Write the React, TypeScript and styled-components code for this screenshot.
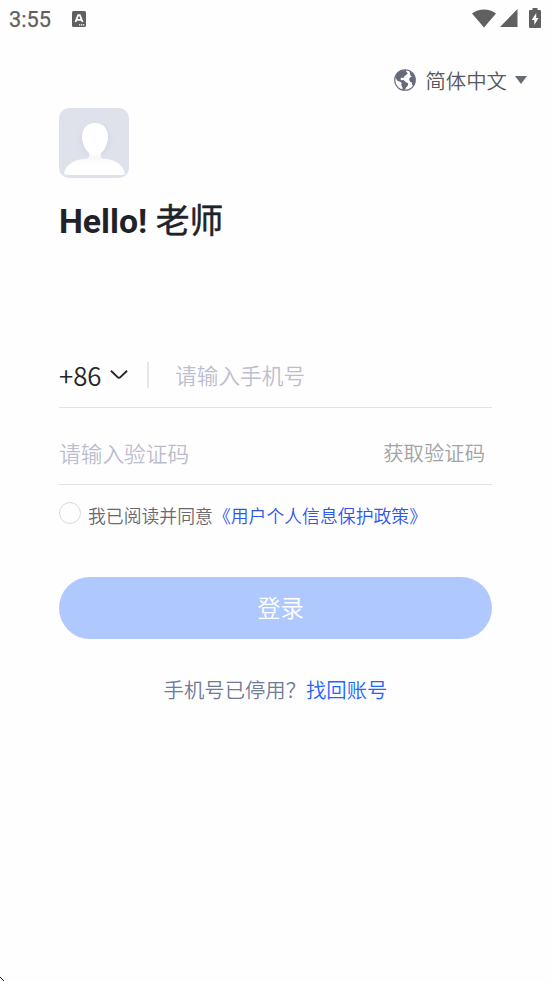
import React from 'react';
import styled, { createGlobalStyle } from 'styled-components';

const GlobalStyle = createGlobalStyle`
  * { box-sizing: border-box; }
  body { margin: 0; background: #fefefe; }
  button, input { font: inherit; border: 0; padding: 0; margin: 0; background: none; }
`;

const Screen = styled.main`
  position: relative;
  width: 551px;
  height: 981px;
  overflow: hidden;
  background: #fefefe;
  font-family: "Noto Sans CJK SC", sans-serif;
  font-weight: 350;
  white-space: nowrap;
`;

const StatusBar = styled.header`
  display: flex;
  align-items: center;
  height: 38px;
  padding: 0 10px 0 9px;
  color: #606060;
`;

const Clock = styled.time`
  width: 63px;
  padding-top: 1px;
  font: 400 21.7px/38px Roboto, sans-serif;
  -webkit-text-stroke: 0.25px #606060;
`;

const StatusIcons = styled.div`
  display: flex;
  align-items: center;
  margin: -2px 0 0 auto;
`;

const StatusIcon = styled.svg<{ $gap?: number }>`
  display: block;
  flex: none;
  margin-left: ${({ $gap = 0 }) => $gap}px;
`;

const LanguageButton = styled.button`
  display: flex;
  align-items: center;
  height: 30px;
  margin: 27px 24px 0 auto;
  color: #56585d;
  font-size: 20.4px;
  line-height: 30px;
`;

const LanguageName = styled.span`
  margin: 0 8px 0 9px;
`;

const Content = styled.section`
  display: flex;
  flex-direction: column;
  width: 433px;
  margin: 13px 0 0 59px;
`;

const Avatar = styled.svg`
  display: block;
  width: 70px;
  height: 70px;
`;

const Greeting = styled.h1`
  margin: 16px 0 0;
  color: #1f2329;
  font-size: 33.8px;
  font-weight: 400;
  line-height: 50px;
  height: 50px;
  -webkit-text-stroke: 0.5px #1f2329;
`;

const Latin = styled.span`
  font-family: Roboto, sans-serif;
  font-weight: 700;
  -webkit-text-stroke: 0;
`;

const Field = styled.div<{ $height: number; $drop?: number }>`
  display: flex;
  align-items: center;
  height: ${({ $height }) => $height}px;
  padding-top: ${({ $drop = 0 }) => $drop}px;
  border-bottom: 1px solid #e3e3e3;
`;

const Form = styled.form`
  display: flex;
  flex-direction: column;
  margin-top: 100px;
`;

const CountryCode = styled.button`
  display: flex;
  align-items: center;
  gap: 8px;
  width: 88px;
  margin-top: -1px;
  color: #252525;
  font-size: 25.8px;
  line-height: 38px;
`;

const Divider = styled.span`
  width: 2px;
  height: 26px;
  margin: -1px 26px 0 0;
  background: #e6e6e6;
`;

const Input = styled.input<{ $lift?: number }>`
  flex: 1;
  min-width: 0;
  height: 36px;
  margin-top: ${({ $lift = 1 }) => -$lift}px;
  color: #252525;
  font-size: 21.7px;
  outline: 0;
  &::placeholder { color: #bcbdcf; opacity: 1; }
`;

const CodeButton = styled.button`
  margin: -2px 7px 0 0;
  color: #a3a3a3;
  font-size: 20.35px;
  line-height: 30px;
`;

const Agreement = styled.label`
  display: flex;
  align-items: center;
  height: 28px;
  margin-top: 16px;
  color: #69696e;
  font-size: 17.85px;
  line-height: 28px;
`;

const Radio = styled.input`
  appearance: none;
  flex: none;
  width: 22px;
  height: 22px;
  margin: -5px 7px 0 0;
  border: 1px solid #d9d9d9;
  border-radius: 50%;
`;

const Link = styled.a<{ $color: string }>`
  color: ${({ $color }) => $color};
  text-decoration: none;
`;

const LoginButton = styled.button`
  height: 62px;
  margin-top: 48px;
  padding: 0 0 2px 10px;
  border-radius: 31px;
  background: #afc9ff;
  color: #fff;
  font-size: 23.3px;
  line-height: 60px;
`;

const Recovery = styled.p`
  margin: 35px 0 0;
  color: #6f7a98;
  font-size: 20.35px;
  line-height: 30px;
  text-align: center;
`;

const CornerMark = styled.svg`
  position: absolute;
  left: 0;
  bottom: 0;
`;

export default function App() {
  return (
    <Screen>
      <GlobalStyle />
      <StatusBar>
        <Clock>3:55</Clock>
        <StatusIcon width="14" height="16" viewBox="0 0 14 16">
          <rect width="14" height="16" rx="1.5" fill="#606060" />
          <path d="M3.4 11 6.2 4.2h1.6l2.8 6.8M4.7 8.8h4.6" fill="none" stroke="#fff" strokeWidth="1.8" />
          <path d="M7 13.8h1.3m.7 0h1.3m.7 0h1.3" stroke="#fff" strokeWidth="1.2" />
        </StatusIcon>
        <StatusIcons>
          <StatusIcon width="24" height="19" viewBox="0 0 24 19">
            <path d="M0 4.5C6.8-.8 17.2-.8 24 4.5L12 18.5Z" fill="#606060" />
          </StatusIcon>
          <StatusIcon $gap={4} width="18" height="18" viewBox="0 0 18 18">
            <path d="M17.5 0v18H0Z" fill="#606060" />
          </StatusIcon>
          <StatusIcon $gap={11} width="12" height="20" viewBox="0 0 12 20">
            <path d="M3.5 0h5v2H11q1 0 1 1v16q0 1-1 1H1q-1 0-1-1V3q0-1 1-1h2.5Z" fill="#606060" />
            <path d="M7.2 5 2.8 12H5.3v5L9.5 10H7.2Z" fill="#fff" />
          </StatusIcon>
        </StatusIcons>
      </StatusBar>

      <LanguageButton type="button">
        <svg width="22" height="22" viewBox="0 0 22 22">
          <circle cx="11" cy="11" r="10.3" fill="none" stroke="#666b78" strokeWidth="1.1" />
          <path d="M12 1 7 1.5 3.2 4 1.5 8.2 3 11.5l3 1.2 1.8 1.3-.6 2 1.2 2.3.2 2.4 2.2.5 1.2-2.8 1.9-2 .3-2-2.6-1.5-2-1.8-2.3.2-.9-1.2 1-1.6 2 .8.7-1.7 2.2-1.8 1.6-1.5L12.4 3Z" fill="#666b78" />
          <path d="m15.5 1.8 3.7 3 2 4.5-.1 4.4-1.6 3.4-1.3-1.1-.3-2.4-1.8-.9-1-2.1.8-2.2 2-1-1.6-1.2Z" fill="#666b78" />
        </svg>
        <LanguageName>简体中文</LanguageName>
        <svg width="12" height="8" viewBox="0 0 12 8"><path d="M0 0h12L6 8Z" fill="#666b78" /></svg>
      </LanguageButton>

      <Content>
        <Avatar viewBox="0 0 70 70">
          <defs>
            <radialGradient id="headShade">
              <stop offset=".6" stopColor="#d5d8e4" stopOpacity=".8" />
              <stop offset="1" stopColor="#dfe2eb" stopOpacity="0" />
            </radialGradient>
            <linearGradient id="neckShade" x1="0" y1="0" x2="0" y2="1">
              <stop stopColor="#f4f4f5" />
              <stop offset=".6" stopColor="#fff" />
            </linearGradient>
          </defs>
          <rect width="70" height="70" rx="10" fill="#dfe2eb" />
          <ellipse cx="36" cy="32" rx="21" ry="23" fill="url(#headShade)" />
          <path d="M30 43h12v5.5q0 2 3 2.2c10 .4 18 5.3 20.5 13q.8 3.3-2.5 3.3H8q-3.3 0-2.7-3C8 55.5 17 51 27 50.7q3-.2 3-2.2Z" fill="url(#neckShade)" />
          <path d="M36 15c8 0 13 5.6 13 14 0 9-6.5 19-13 19s-13-10-13-19c0-8.4 5-14 13-14Z" fill="#fff" />
        </Avatar>
        <Greeting><Latin>Hello! </Latin>老师</Greeting>

        <Form onSubmit={(event) => event.preventDefault()}>
          <Field $height={64}>
            <CountryCode type="button">
              +86
              <svg width="18" height="12" viewBox="0 0 19 12">
                <path d="m1 1.5 7 6.7q1.500 1.400 3 0L18 1.500" fill="none" stroke="#252525" strokeWidth="2" />
              </svg>
            </CountryCode>
            <Divider />
            <Input type="tel" placeholder="请输入手机号" $lift={3} />
          </Field>
          <Field $height={77} $drop={14}>
            <Input type="text" placeholder="请输入验证码" />
            <CodeButton type="button">获取验证码</CodeButton>
          </Field>
          <Agreement>
            <Radio type="radio" />
            <span>我已阅读并同意<Link $color="#2f55ee">《用户个人信息保护政策》</Link></span>
          </Agreement>
          <LoginButton type="submit">登录</LoginButton>
        </Form>
        <Recovery>手机号已停用？<Link $color="#1d66ff">找回账号</Link></Recovery>
      </Content>
      <CornerMark width="5" height="5" viewBox="0 0 5 5">
        <path d="M0 1h1v1H0zm1 1h1v1H1zm1 1h1v1H2zm1 1h1v1H3z" fill="#111" />
      </CornerMark>
    </Screen>
  );
}
